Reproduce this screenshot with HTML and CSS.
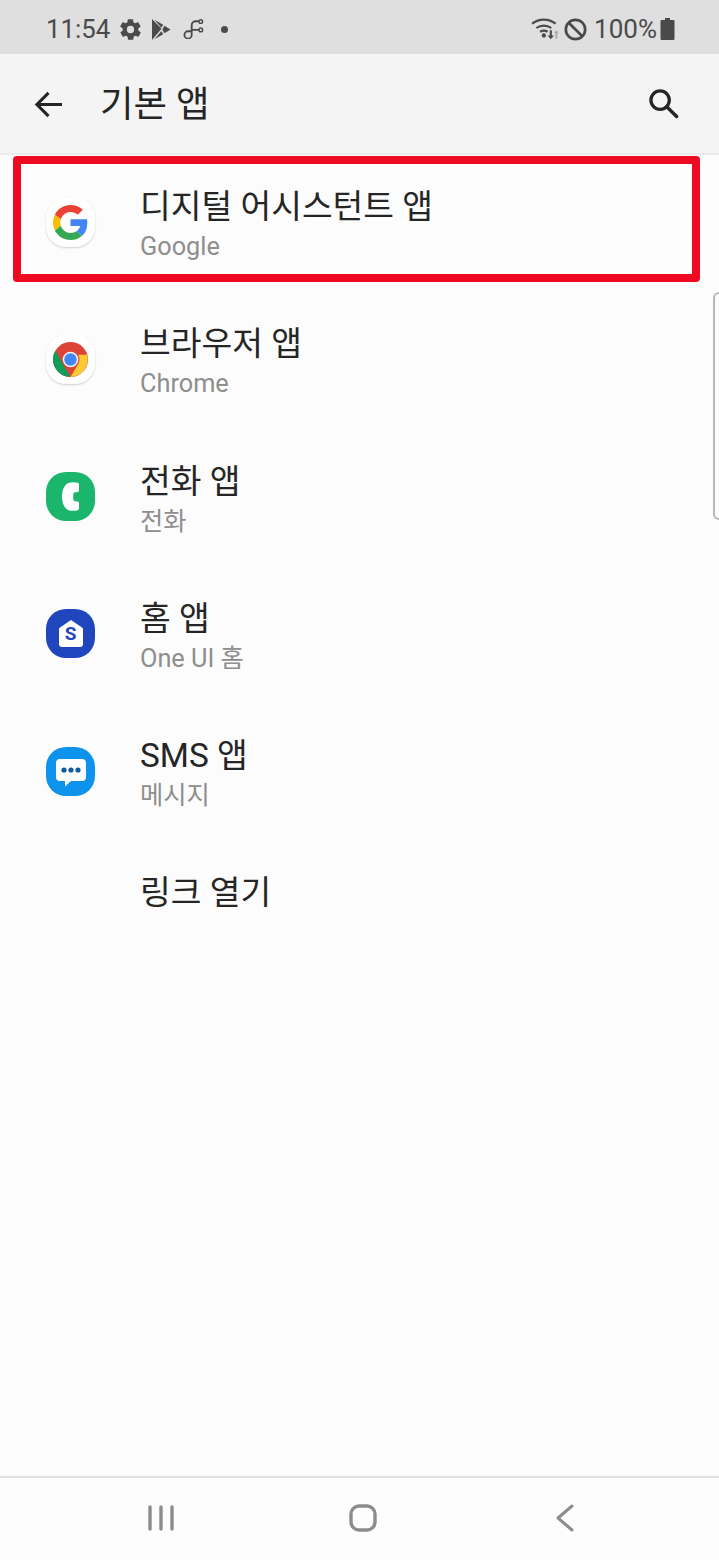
FILE: index.html
```html
<!DOCTYPE html>
<html lang="ko">
<head>
    <meta charset="UTF-8">
    <meta name="viewport" content="width=device-width, initial-scale=1.0">
    <title>기본 앱</title>
    <link rel="stylesheet" href="styles.css">
</head>
<body>
    <div class="phone">
        <div class="status-bar">
            <div class="status-left">
                <span class="clock">11:54</span>
                <svg class="gear" viewBox="0 0 24 24"><path fill="#4a4a4a" d="M19.4 13c.1-.3.1-.7.1-1s0-.7-.1-1l2.100-1.600c.2-.2.2-.4.1-.6l-2-3.500c-.1-.2-.4-.3-.6-.2l-2.500 1c-.5-.4-1.100-.7-1.700-1l-.4-2.600c0-.3-.2-.4-.5-.4h-4c-.3 0-.5.2-.5.4l-.4 2.600c-.6.3-1.200.6-1.700 1l-2.500-1c-.2-.1-.5 0-.6.2l-2 3.500c-.1.2-.1.5.1.6L4.600 11c-.1.3-.1.7-.1 1s0 .7.1 1l-2.100 1.600c-.2.2-.2.4-.1.6l2 3.500c.1.2.4.3.6.2l2.500-1c.5.4 1.100.7 1.700 1l.4 2.600c0 .3.2.4.5.4h4c.3 0 .5-.2.5-.4l.4-2.600c.6-.3 1.200-.6 1.700-1l2.500 1c.2.1.5 0 .6-.2l2-3.500c.1-.2.1-.5-.1-.6zM12 15.500a3.500 3.500 0 1 1 0-7 3.500 3.500 0 0 1 0 7z"/></svg>
                <svg class="play" viewBox="0 0 20 22"><path fill="#4a4a4a" d="M0 0l10 10.200L0 22zM2.500 .8l9.300 5.300-2 3zM2.500 21.200l7.300-8.300 2 3zM13 7l6.500 4-6.500 4-2-4z"/></svg>
                <svg class="link" viewBox="0 0 24 22"><path fill="none" stroke="#4a4a4a" stroke-width="2" d="M9 13.500h-3a4 4 0 1 0 4 4V7a4.500 4.500 0 0 1 4.500-4.500H18M10 12h8"/><circle cx="20" cy="2.800" r="2" fill="none" stroke="#4a4a4a" stroke-width="1.600"/><circle cx="20" cy="12" r="2" fill="none" stroke="#4a4a4a" stroke-width="1.600"/></svg>
                <span class="dot"></span>
            </div>
            <div class="status-right">
                <svg class="wifi" viewBox="0 0 28 22"><g fill="none" stroke="#4a4a4a" stroke-width="2"><path d="M1 7a18 18 0 0 1 22 0"/><path d="M5 11a12 12 0 0 1 14 0"/><path d="M8.500 14.500a6.500 6.500 0 0 1 7 0"/></g><circle cx="12" cy="18" r="2" fill="#4a4a4a"/><path fill="#4a4a4a" d="M17.500 13h2v5h2l-3 3.500-3-3.500h2z"/><path fill="#a8a8a8" d="M24.500 21h-1.600v-5h-1.500l2.300-3 2.300 3h-1.500z"/></svg>
                <svg class="block" viewBox="0 0 24 24"><circle cx="12" cy="12" r="9.300" fill="none" stroke="#4a4a4a" stroke-width="2.600"/><path stroke="#4a4a4a" stroke-width="2.600" d="M5.500 5.500l13 13"/></svg>
                <span class="battery-text">100%</span>
                <svg class="battery" viewBox="0 0 15 22"><path fill="#4a4a4a" d="M5 0h5v2h3.500a1 1 0 0 1 1 1v18a1 1 0 0 1-1 1h-12a1 1 0 0 1-1-1V3a1 1 0 0 1 1-1H5z"/></svg>
            </div>
        </div>

        <div class="toolbar">
            <svg class="back" viewBox="0 0 30 28"><path fill="none" stroke="#252525" stroke-width="3.200" d="M29 14H3M15 2L3 14l12 12"/></svg>
            <h1 class="toolbar-title">기본 앱</h1>
            <svg class="search" viewBox="0 0 32 32"><circle cx="12.500" cy="12.500" r="9.500" fill="none" stroke="#252525" stroke-width="3.400"/><path stroke="#252525" stroke-width="3.600" stroke-linecap="round" d="M19.500 19.500L29.500 29.500"/></svg>
        </div>

        <div class="content">
            <div class="row">
                <div class="app-icon icon-white">
                    <svg viewBox="0 0 36 36" class="glyph">
                        <path fill="#ea4335" d="M18 7.200c2.900 0 5.400 1 7.400 2.900l5.300-5.300C27.400 1.800 23.100 0 18 0 11 0 4.900 4 1.900 9.900l6.200 4.800C9.600 10.300 13.400 7.200 18 7.200z"/>
                        <path fill="#4285f4" d="M35.300 18.400c0-1.300-.1-2.500-.3-3.700H18v7h9.800c-.4 2.300-1.700 4.200-3.600 5.500l5.800 4.500c3.300-3.100 5.300-7.600 5.300-13.300z"/>
                        <path fill="#fbbc05" d="M8.100 21.300c-.4-1-.6-2.100-.6-3.300s.2-2.300.6-3.300L1.900 9.900C.7 12.300 0 15.100 0 18s.7 5.700 1.900 8.100z"/>
                        <path fill="#34a853" d="M18 36c4.900 0 8.900-1.600 11.900-4.400l-5.800-4.500c-1.600 1.100-3.700 1.700-6.100 1.700-4.600 0-8.400-3.100-9.900-7.400l-6.200 4.800C4.900 32 11 36 18 36z"/>
                    </svg>
                </div>
                <div class="row-text">
                    <div class="row-title">디지털 어시스턴트 앱</div>
                    <div class="row-sub">Google</div>
                </div>
            </div>
            <div class="row">
                <div class="app-icon icon-white">
                    <svg viewBox="0 0 36 36" class="glyph">
                        <circle cx="18" cy="18" r="18" fill="#db4437"/>
                        <path fill="#0f9d58" d="M2.600 8.800L10.200 22.500 18 36a18 18 0 0 1-15.400-27.200z"/>
                        <path fill="#fcc934" d="M18 36l8-13.700a9 9 0 0 0-.200-9.300H35a18 18 0 0 1-17 23z"/>
                        <circle cx="18" cy="18" r="8" fill="#f1f1f1"/>
                        <circle cx="18" cy="18" r="6.400" fill="#4285f4"/>
                    </svg>
                </div>
                <div class="row-text">
                    <div class="row-title">브라우저 앱</div>
                    <div class="row-sub">Chrome</div>
                </div>
            </div>
            <div class="row">
                <div class="app-icon icon-phone">
                    <svg viewBox="0 0 17 29" class="glyph-phone"><path fill="#fff" d="M6 1.200C9 0 13 0 15.500 .8c1 .4 1.500 1 1.500 2v5.500c0 1-.6 1.700-1.600 1.800l-3.500.4c-1 2-1 6.600 0 8.600l3.500.4c1 .1 1.600.8 1.600 1.800v5c0 1-.5 1.600-1.500 2-2.500.8-6.500.8-9.500-.4C2 26 0 20.500 0 14.500S2 3 6 1.200z"/></svg>
                </div>
                <div class="row-text">
                    <div class="row-title">전화 앱</div>
                    <div class="row-sub">전화</div>
                </div>
            </div>
            <div class="row">
                <div class="app-icon icon-home">
                    <svg viewBox="0 0 28 28" class="glyph-home"><path fill="#fff" d="M14 0l11 7.600c.7.500 1 1.100 1 1.900V24a3 3 0 0 1-3 3H5a3 3 0 0 1-3-3V9.500c0-.8.300-1.400 1-1.900z"/></svg>
                    <span class="home-s">S</span>
                </div>
                <div class="row-text">
                    <div class="row-title">홈 앱</div>
                    <div class="row-sub">One UI 홈</div>
                </div>
            </div>
            <div class="row">
                <div class="app-icon icon-sms">
                    <svg viewBox="0 0 30 28" class="glyph-sms"><path fill="#fff" d="M4 0h22a4 4 0 0 1 4 4v14a4 4 0 0 1-4 4H15l-6 5.500V22H4a4 4 0 0 1-4-4V4a4 4 0 0 1 4-4z"/><circle cx="8" cy="11" r="2.600" fill="#0d5a9c"/><circle cx="15" cy="11" r="2.600" fill="#0d5a9c"/><circle cx="22" cy="11" r="2.600" fill="#0d5a9c"/></svg>
                </div>
                <div class="row-text">
                    <div class="row-title">SMS 앱</div>
                    <div class="row-sub">메시지</div>
                </div>
            </div>
            <div class="row">
                <div class="app-icon icon-none"></div>
                <div class="row-text">
                    <div class="row-title">링크 열기</div>
                </div>
            </div>

            <!-- annotation and edge panel handle sit over the list -->
            <div class="highlight"></div>
            <div class="edge-handle"></div>
        </div>

        <div class="nav-bar">
            <svg class="nav-recent" viewBox="0 0 26 26"><path stroke="#8c8c8c" stroke-width="3.400" stroke-linecap="round" d="M2 2v22M13 2v22M24 2v22"/></svg>
            <svg class="nav-home" viewBox="0 0 28 28"><rect x="2" y="2" width="24" height="24" rx="8" fill="none" stroke="#8c8c8c" stroke-width="3.400"/></svg>
            <svg class="nav-back" viewBox="0 0 18 28"><path fill="none" stroke="#8c8c8c" stroke-width="3" stroke-linecap="round" stroke-linejoin="round" d="M16 2L2 14l14 12"/></svg>
        </div>
    </div>
</body>
</html>
```

FILE: styles.css
```css
* {
    box-sizing: border-box;
}
body {
    margin: 0;
    background-color: #fcfcfc;
    font-family: Roboto, "Noto Sans CJK KR", sans-serif;
}
.phone {
    width: 719px;
    height: 1560px;
    display: flex;
    flex-direction: column;
    overflow: hidden;
}

/* status bar */
.status-bar {
    height: 54px;
    flex: none;
    display: flex;
    justify-content: space-between;
    align-items: center;
    padding: 4px 44px 0 46px;
    background-color: #dfdfdf;
    color: #4a4a4a;
}
.status-left,
.status-right {
    display: flex;
    align-items: center;
}
.clock {
    font-size: 25.8px;
    line-height: 30px;
}
.gear {
    width: 25px;
    height: 25px;
    margin-left: 8px;
}
.play {
    width: 19px;
    height: 21px;
    margin-left: 9px;
}
.link {
    width: 23px;
    height: 20px;
    margin-left: 11px;
}
.dot {
    width: 7px;
    height: 7px;
    margin-left: 16px;
    border-radius: 50%;
    background-color: #4a4a4a;
}
.wifi {
    width: 30px;
    height: 24px;
    margin-top: -3px;
}
.block {
    width: 25px;
    height: 25px;
    margin-left: 2px;
}
.battery-text {
    margin-left: 6px;
    font-size: 26px;
    line-height: 30px;
}
.battery {
    width: 15px;
    height: 22px;
    margin-left: 3px;
}

/* toolbar */
.toolbar {
    height: 101px;
    flex: none;
    display: flex;
    align-items: center;
    padding: 1px 40px 0 34px;
    background-color: #f4f4f4;
    border-bottom: 2px solid #ebebeb;
}
.back {
    width: 29px;
    height: 27px;
    flex: none;
}
.toolbar-title {
    flex: 1;
    margin: 2px 0 0 37px;
    font-size: 36.4px;
    font-weight: 400;
    line-height: 44px;
    color: #252525;
}
.search {
    width: 31px;
    height: 31px;
    margin-top: -2px;
}

/* list */
.content {
    flex: 1;
    position: relative;
    padding-top: 1px;
}
.row {
    height: 137.3px;
    display: flex;
    padding: 31px 0 0 46px;
}
.app-icon {
    width: 49px;
    height: 49px;
    flex: none;
    position: relative;
    margin-top: 10.5px;
    display: flex;
    justify-content: center;
    align-items: center;
    border-radius: 20px;
}
.icon-white {
    background-color: #fff;
    box-shadow: 0 1px 2px rgba(0, 0, 0, 0.18);
}
.icon-phone {
    background-color: #1bb56c;
}
.icon-home {
    background-color: #1f46bd;
}
.icon-sms {
    background-color: #0d93ec;
}
.icon-none {
    background: none;
}
.glyph {
    width: 35px;
    height: 35px;
}
.glyph-phone {
    width: 17px;
    height: 29px;
}
.glyph-home {
    width: 28px;
    height: 28px;
}
.glyph-sms {
    width: 30px;
    height: 28px;
    margin-top: 3px;
}
.home-s {
    position: absolute;
    top: 13px;
    left: 0;
    right: 0;
    text-align: center;
    font-size: 19px;
    line-height: 24px;
    font-weight: 700;
    color: #1f46bd;
}
.row-text {
    margin-left: 45px;
}
.row-title {
    font-size: 33.4px;
    line-height: 40px;
    color: #252525;
}
.row-sub {
    margin-top: 5px;
    font-size: 25.3px;
    line-height: 30px;
    color: #8e8e8e;
}
.highlight {
    position: absolute;
    top: 1px;
    left: 13px;
    width: 687px;
    height: 126px;
    border: 8px solid #ee0a20;
    border-radius: 4px;
}
.edge-handle {
    position: absolute;
    top: 137px;
    right: 0;
    width: 6px;
    height: 228px;
    border: 2px solid #b8b8b8;
    border-right: none;
    border-radius: 6px 0 0 6px;
}

/* nav bar */
.nav-bar {
    height: 84px;
    flex: none;
    display: flex;
    align-items: center;
    padding: 0 145px 2px 148px;
    justify-content: space-between;
    background-color: #fdfdfd;
    border-top: 2px solid #e2e2e2;
}
.nav-recent {
    width: 26px;
    height: 26px;
}
.nav-home {
    width: 28px;
    height: 28px;
    margin-right: 4px;
}
.nav-back {
    width: 18px;
    height: 28px;
}
```
